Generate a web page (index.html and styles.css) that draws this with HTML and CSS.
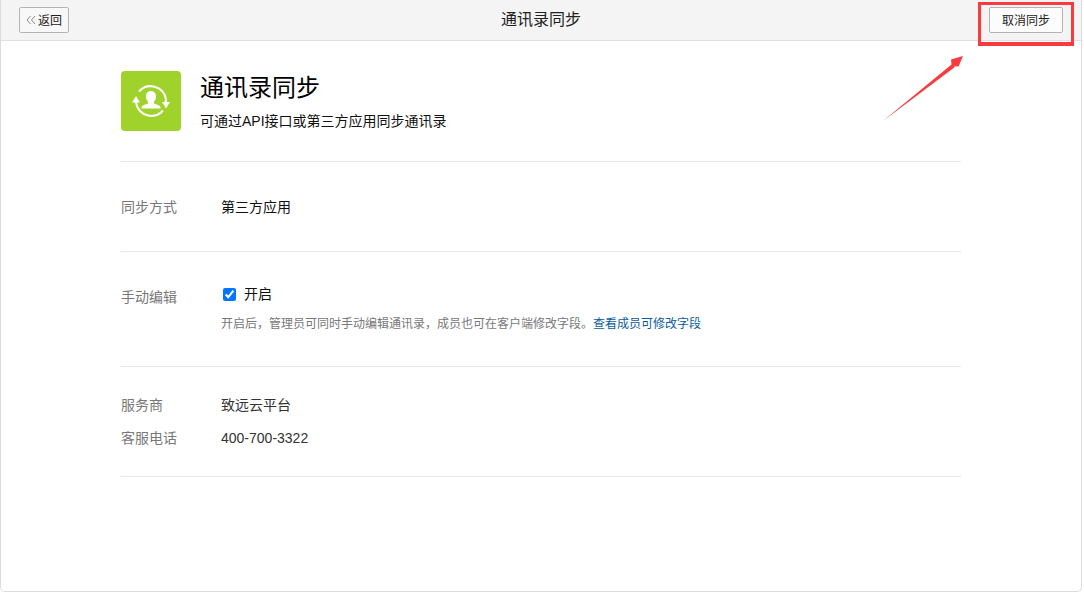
FILE: index.html
```html
<!DOCTYPE html>
<html lang="zh-CN">
<head>
<meta charset="utf-8">
<title>通讯录同步</title>
<link rel="stylesheet" href="styles.css">
</head>
<body>
<div class="window">
  <header class="topbar">
    <button class="btn btn-back" type="button"><svg class="chev" width="10" height="10" viewBox="0 0 10 10"><path d="M4.500 1 1 5l3.500 4M9 1 5.500 5 9 9" fill="none" stroke="#888" stroke-width="1"/></svg>返回</button>
    <h1 class="topbar-title">通讯录同步</h1>
    <button class="btn btn-cancel" type="button">取消同步</button>
  </header>
  <main class="content">
    <section class="hero">
      <div class="app-icon">
        <svg width="60" height="60" viewBox="0 0 60 60">
          <path d="M18 20.500A15.500 15.500 0 0 1 44.800 27.500V31M42 39.500A15.500 15.500 0 0 1 15.200 32.500V29" fill="none" stroke="#fff" stroke-width="2"/>
          <path d="M41 31h8l-4 6.500zM11 31.500h8l-4-6.500z" fill="#fff"/>
          <path d="M30 20c3 0 5 2.300 5 5.500 0 2.200-.8 4-2 5.300v1.400c1.800 1.200 5.500 1.700 6.500 3.800v1.500h-19v-1.500c1-2.100 4.700-2.600 6.500-3.800v-1.400c-1.200-1.300-2-3.100-2-5.300 0-3.200 2-5.500 5-5.500z" fill="#fff"/>
        </svg>
      </div>
      <div class="hero-text">
        <h2 class="hero-title">通讯录同步</h2>
        <p class="hero-sub">可通过API接口或第三方应用同步通讯录</p>
      </div>
    </section>
    <section class="block block-method">
      <div class="row">
        <span class="label">同步方式</span>
        <span class="value">第三方应用</span>
      </div>
    </section>
    <section class="block block-edit">
      <div class="row row-edit">
        <span class="label">手动编辑</span>
        <div class="edit-body">
          <label class="check"><input type="checkbox" checked>开启</label>
          <p class="hint">开启后，管理员可同时手动编辑通讯录，成员也可在客户端修改字段。<a class="link" href="#">查看成员可修改字段</a></p>
        </div>
      </div>
    </section>
    <section class="block block-provider">
      <div class="row">
        <span class="label">服务商</span>
        <span class="value value-soft">致远云平台</span>
      </div>
      <div class="row">
        <span class="label">客服电话</span>
        <span class="value value-soft">400-700-3322</span>
      </div>
    </section>
  </main>
</div>
<div class="callout-box"></div>
<svg class="callout-arrow" width="90" height="75" viewBox="0 0 90 75"><path d="M3 71 71.500 14.500 71 9.500 83 6l-4.500 10.500-4-.2-.2 1.200z" fill="#fa3a3e"/></svg>
</body>
</html>
```
FILE: styles.css
```css
* { box-sizing: border-box; }
html, body { margin: 0; height: 100%; }
body {
  background: #fff;
  font-family: "Liberation Sans", "Noto Sans CJK SC", sans-serif;
  color: #000;
  overflow: hidden;
}
.window {
  width: 1082px;
  height: 592px;
  border: 1px solid #dcdcdc;
  border-top: 0;
  border-radius: 0 0 5px 5px;
  background: #fff;
}
.topbar {
  height: 41px;
  display: flex;
  align-items: center;
  justify-content: space-between;
  padding: 0 18px 1px;
  position: relative;
  background: #f4f4f4;
  border-bottom: 1px solid #dfe1e4;
}
.topbar-title {
  position: absolute;
  left: 0;
  right: 0;
  top: 11px;
  margin: 0;
  text-align: center;
  font-size: 16px;
  font-weight: 400;
  line-height: 18px;
  color: #222;
  pointer-events: none;
}
.btn {
  height: 26px;
  padding: 0;
  font: inherit;
  font-size: 12px;
  color: #222;
  background: #fcfcfc;
  border: 1px solid #b4b4b4;
  border-radius: 2px;
}
.btn-back { width: 50px; display: flex; align-items: center; justify-content: center; background: #f8f8f8; }
.chev { margin-right: 2px; }
.btn-cancel { width: 74px; }
.content { margin-left: 120px; width: 840px; }
.hero {
  height: 121px;
  padding-top: 30px;
  display: flex;
  border-bottom: 1px solid #e6e6e6;
}
.app-icon {
  width: 60px;
  height: 60px;
  border-radius: 4px;
  background: #9fd22a;
  flex: none;
}
.hero-text { margin-left: 19px; }
.hero-title {
  margin: 0;
  padding-top: 2px;
  font-size: 24px;
  font-weight: 400;
  line-height: 30px;
}
.hero-sub {
  margin: 9px 0 0;
  font-size: 14px;
  line-height: 18px;
  color: #111;
}
.block { border-bottom: 1px solid #e6e6e6; }
.block-method { height: 90px; padding-top: 36px; }
.block-edit { height: 115px; padding-top: 32px; }
.block-provider { height: 110px; padding-top: 29px; display: flex; flex-direction: column; gap: 15px; }
.row { display: flex; align-items: flex-start; font-size: 14px; line-height: 18px; }
.label { width: 100px; flex: none; color: #787878; }
.value { color: #111; }
.value-soft { color: #333; }
.row-edit .label { padding-top: 4px; }
.check {
  display: flex;
  align-items: center;
  height: 18px;
  margin-top: 1px;
  color: #111;
}
.check input {
  width: 13px;
  height: 13px;
  margin: 0 8px 0 2px;
  accent-color: #0075ff;
}
.hint {
  margin: 12px 0 0;
  font-size: 12px;
  line-height: 18px;
  color: #787878;
}
.link { color: #0a5c9e; text-decoration: none; }
.callout-box {
  position: absolute;
  left: 978px;
  top: 2px;
  width: 96px;
  height: 44px;
  border: 3px solid #fa3a3e;
  border-bottom-width: 4px;
}
.callout-arrow {
  position: absolute;
  left: 880px;
  top: 50px;
}
```
